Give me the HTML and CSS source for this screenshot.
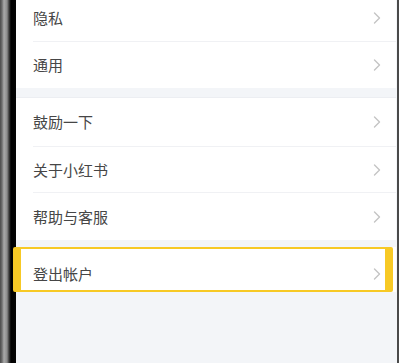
FILE: index.html
```html
<!DOCTYPE html>
<html lang="zh-CN">
<head>
<meta charset="utf-8">
<link rel="stylesheet" href="styles.css">
</head>
<body>
<div class="phone">
  <div class="bezel"></div>
  <div class="screen">
    <div class="group">
      <div class="row first"><span class="label">隐私</span><svg class="chev" viewBox="0 0 8 12"><path d="M1.5 1 L6.5 6 L1.5 11"/></svg></div>
      <div class="row last"><span class="label">通用</span><svg class="chev" viewBox="0 0 8 12"><path d="M1.5 1 L6.5 6 L1.5 11"/></svg></div>
    </div>
    <div class="gap g1"></div>
    <div class="group">
      <div class="row r3"><span class="label">鼓励一下</span><svg class="chev" viewBox="0 0 8 12"><path d="M1.5 1 L6.5 6 L1.5 11"/></svg></div>
      <div class="row r4"><span class="label">关于小红书</span><svg class="chev" viewBox="0 0 8 12"><path d="M1.5 1 L6.5 6 L1.5 11"/></svg></div>
      <div class="row last r5"><span class="label">帮助与客服</span><svg class="chev" viewBox="0 0 8 12"><path d="M1.5 1 L6.5 6 L1.5 11"/></svg></div>
    </div>
    <div class="gap g2"></div>
    <div class="group logout-wrap">
      <div class="row last logout"><span class="label">登出帐户</span><svg class="chev" viewBox="0 0 8 12"><path d="M1.5 1 L6.5 6 L1.5 11"/></svg></div>
    </div>
    <div class="rest"></div>
  </div>
  <div class="edge"></div>
  <div class="highlight"></div>
</div>
</body>
</html>
```
FILE: styles.css
```css
html, body {
  margin: 0;
  padding: 0;
  width: 400px;
  height: 363px;
  overflow: hidden;
  background: #ffffff;
}
.phone {
  position: relative;
  display: flex;
  width: 400px;
  height: 363px;
}
.bezel {
  width: 16px;
  flex: none;
  background: linear-gradient(to right, #4a4a4a 0px, #6e6e6e 2px, #a9a9a9 4px, #8c8c8c 7px, #3c3c3c 9px, #000 11px, #050505 16px);
}
.screen {
  flex: 1;
  display: flex;
  flex-direction: column;
  background: #f3f5f8;
}
.edge {
  width: 4px;
  flex: none;
  background: linear-gradient(to right, #f3f5f8 0px, #f3f5f8 1px, #4a4a4a 1px, #4a4a4a 3px, #ffffff 3px);
}
.group {
  background: #ffffff;
  display: flex;
  flex-direction: column;
}
.row {
  display: flex;
  align-items: center;
  justify-content: space-between;
  height: 46px;
  margin-left: 17px;
  padding-right: 15px;
  border-bottom: 1px solid #f0f1f4;
  box-sizing: border-box;
}
.row.first {
  height: 42px;
  padding-bottom: 5px;
}
.row.last {
  border-bottom: none;
}
.r3 { height: 49px; }
.r4 { height: 46px; }
.r5 { height: 47px; }
.label {
  font-family: "Noto Sans CJK SC", "Noto Sans", sans-serif;
  font-size: 15px;
  color: #464646;
  line-height: 20px;
}
.chev {
  width: 8px;
  height: 12px;
  fill: none;
  stroke: #c4c4c4;
  stroke-width: 1.4;
  stroke-linecap: round;
  stroke-linejoin: round;
}
.gap.g1 {
  height: 10px;
  border-bottom: 1px solid #eceef2;
  box-sizing: border-box;
}
.gap.g2 {
  height: 7px;
}
.logout {
  height: 45px;
  padding-top: 8px;
}
.rest {
  flex: 1;
}
.highlight {
  position: absolute;
  left: 13px;
  top: 247px;
  width: 380px;
  height: 45px;
  box-sizing: border-box;
  border: 2px solid #f7c925;
  border-left-width: 8px;
  border-right-width: 8px;
  border-radius: 2px;
}
```
